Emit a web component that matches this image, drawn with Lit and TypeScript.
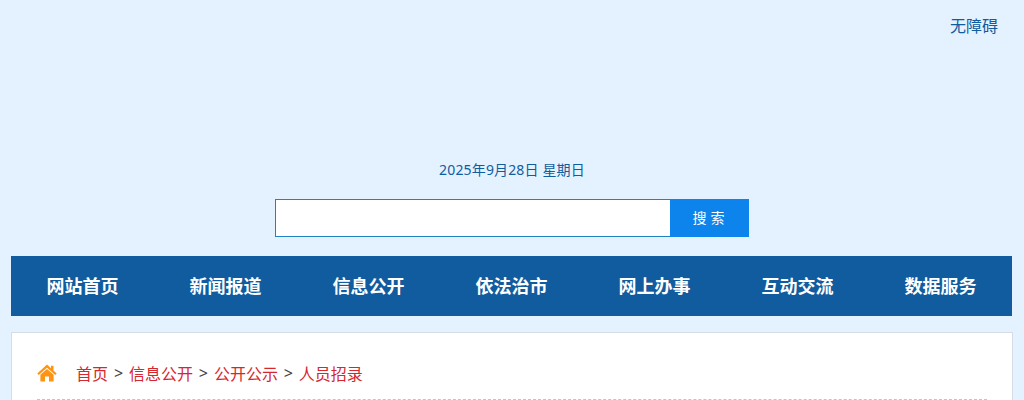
import { LitElement, html, css } from "lit";
import { customElement } from "lit/decorators.js";

const NAV = ["网站首页", "新闻报道", "信息公开", "依法治市", "网上办事", "互动交流", "数据服务"];
const CRUMBS = ["首页", "信息公开", "公开公示", "人员招录"];

@customElement("app-root")
export class AppRoot extends LitElement {
  static styles = css`
    :host {
      display: block;
      height: 400px;
      overflow: hidden;
      background: #e4f1fe;
      font-family: "Noto Sans", "Noto Sans CJK SC", sans-serif;
    }
    .top {
      display: flex;
      justify-content: flex-end;
      height: 130px;
      padding: 15px 26px 0 0;
      box-sizing: border-box;
    }
    .top a {
      font-size: 16px;
      line-height: 22px;
      color: #105c9e;
    }
    .date {
      margin-top: 30px;
      text-align: center;
      font-size: 14px;
      line-height: 20px;
      letter-spacing: 0.15px;
      color: #105c9e;
    }
    .search {
      display: flex;
      justify-content: center;
      margin-top: 19px;
    }
    .search .box {
      width: 395px;
      height: 38px;
      box-sizing: border-box;
      background: #fff;
      border: 1px solid #2280c4;
      border-right: none;
    }
    .search .btn {
      width: 79px;
      height: 38px;
      box-sizing: border-box;
      padding-left: 2px;
      background: #0d83ec;
      color: #fff;
      font-size: 14px;
      line-height: 38px;
      text-align: center;
      letter-spacing: 4px;
    }
    nav {
      display: grid;
      grid-template-columns: repeat(7, 143px);
      margin: 19px 0 0 11px;
      width: 1001px;
      height: 60px;
      background: #105c9e;
    }
    nav a {
      text-align: center;
      line-height: 61px;
      font-size: 18px;
      font-weight: 700;
      color: #fff;
    }
    .card {
      margin: 16px 11px 0 11px;
      height: 200px;
      box-sizing: border-box;
      background: #fff;
      border: 1px solid #d4dde5;
      padding: 0 25px;
    }
    .crumbs {
      display: flex;
      align-items: center;
      height: 67px;
      box-sizing: border-box;
      padding-top: 13px;
      border-bottom: 1px dashed #c4c4c4;
      font-size: 16px;
      color: #444;
    }
    .crumbs svg {
      width: 20px;
      height: 18px;
      margin-right: 19px;
    }
    .crumbs a {
      color: #d6262e;
    }
    .crumbs span {
      margin: 0 5.9px;
    }
  `;

  render() {
    return html`
      <div class="top"><a>无障碍</a></div>
      <div class="date">2025年9月28日 星期日</div>
      <div class="search">
        <div class="box"></div>
        <div class="btn">搜索</div>
      </div>
      <nav>${NAV.map((n) => html`<a>${n}</a>`)}</nav>
      <div class="card">
        <div class="crumbs">
          <svg viewBox="0 0 20 18">
            <path fill="#ff9312" d="M10 0.6 L0.3 9.4 L1.7 11 L10 3.7 L18.3 11 L19.7 9.4 L16.5 6.5 V1.8 H14 V4.3 Z M10 4.9 L3.4 10.7 V17.5 H8 V12.5 H12 V17.5 H16.6 V10.7 Z" />
          </svg>
          ${CRUMBS.map((c, i) => html`${i > 0 ? html`<span>&gt;</span>` : ""}<a>${c}</a>`)}
        </div>
      </div>
    `;
  }
}
